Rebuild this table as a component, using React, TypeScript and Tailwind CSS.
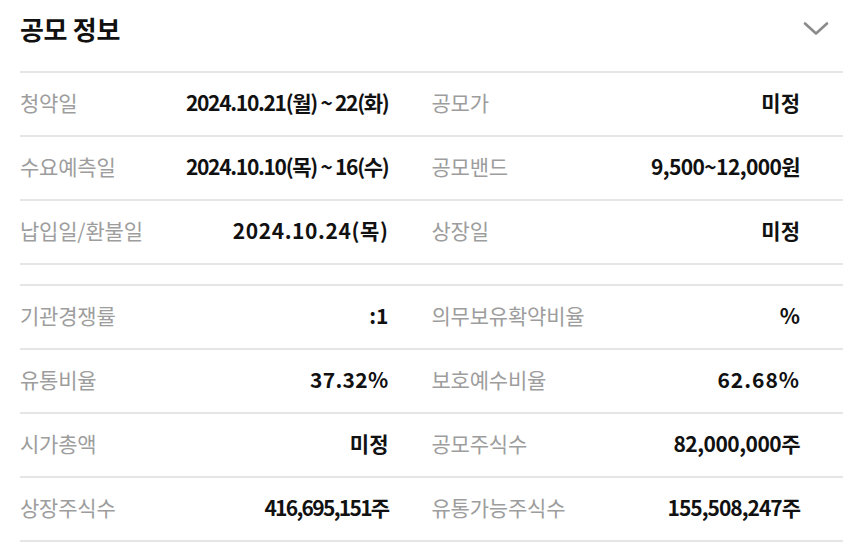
const font = {
  fontFamily: '"Noto Sans CJK KR", "Noto Sans", sans-serif',
};

type Item = { label: string; value: string; track: string };

const group1: Item[][] = [
  [
    { label: "청약일", value: "2024.10.21(월) ~ 22(화)", track: "tracking-[-1.3px]" },
    { label: "공모가", value: "미정", track: "tracking-[0px]" },
  ],
  [
    { label: "수요예측일", value: "2024.10.10(목) ~ 16(수)", track: "tracking-[-1.3px]" },
    { label: "공모밴드", value: "9,500~12,000원", track: "tracking-[-0.6px]" },
  ],
  [
    { label: "납입일/환불일", value: "2024.10.24(목)", track: "tracking-[0.6px]" },
    { label: "상장일", value: "미정", track: "tracking-[0px]" },
  ],
];

const group2: Item[][] = [
  [
    { label: "기관경쟁률", value: ":1", track: "tracking-[0px]" },
    { label: "의무보유확약비율", value: "%", track: "tracking-[0px]" },
  ],
  [
    { label: "유통비율", value: "37.32%", track: "tracking-[0.3px]" },
    { label: "보호예수비율", value: "62.68%", track: "tracking-[1px]" },
  ],
  [
    { label: "시가총액", value: "미정", track: "tracking-[0px]" },
    { label: "공모주식수", value: "82,000,000주", track: "tracking-[-0.5px]" },
  ],
  [
    { label: "상장주식수", value: "416,695,151주", track: "tracking-[-1.7px]" },
    { label: "유통가능주식수", value: "155,508,247주", track: "tracking-[-1px]" },
  ],
];

function Cell({ item }: { item: Item }) {
  return (
    <div className="flex items-center justify-between pr-[43px] pb-[3px]">
      <span className="text-[21px] text-[#9d9d9d] tracking-[-0.2px]">{item.label}</span>
      <span className={"text-[21px] font-bold text-[#111] " + item.track}>{item.value}</span>
    </div>
  );
}

function Group({ rows }: { rows: Item[][] }) {
  return (
    <div className="border-t-2 border-[#e6e6e6]">
      {rows.map((row, i) => (
        <div key={i} className="grid h-[64px] grid-cols-2 border-b-2 border-[#e6e6e6]">
          {row.map((item) => (
            <Cell key={item.label} item={item} />
          ))}
        </div>
      ))}
    </div>
  );
}

export default function App() {
  return (
    <div className="h-[556px] w-[857px] bg-white pl-5 pr-[14px]" style={font}>
      <div className="flex h-[71px] items-start justify-between pt-[9px] pr-[14px]">
        <h2 className="text-[26px] font-bold leading-[40px] text-[#111] tracking-[-0.3px]">공모 정보</h2>
        <svg width="26" height="16" viewBox="0 0 26 16" className="mt-[12px]" fill="none">
          <path d="M2 2.5l11 10L24 2.5" stroke="#8a8a8a" strokeWidth="2.6" strokeLinecap="round" strokeLinejoin="round" />
        </svg>
      </div>
      <Group rows={group1} />
      <div className="h-[19px]" />
      <Group rows={group2} />
    </div>
  );
}
